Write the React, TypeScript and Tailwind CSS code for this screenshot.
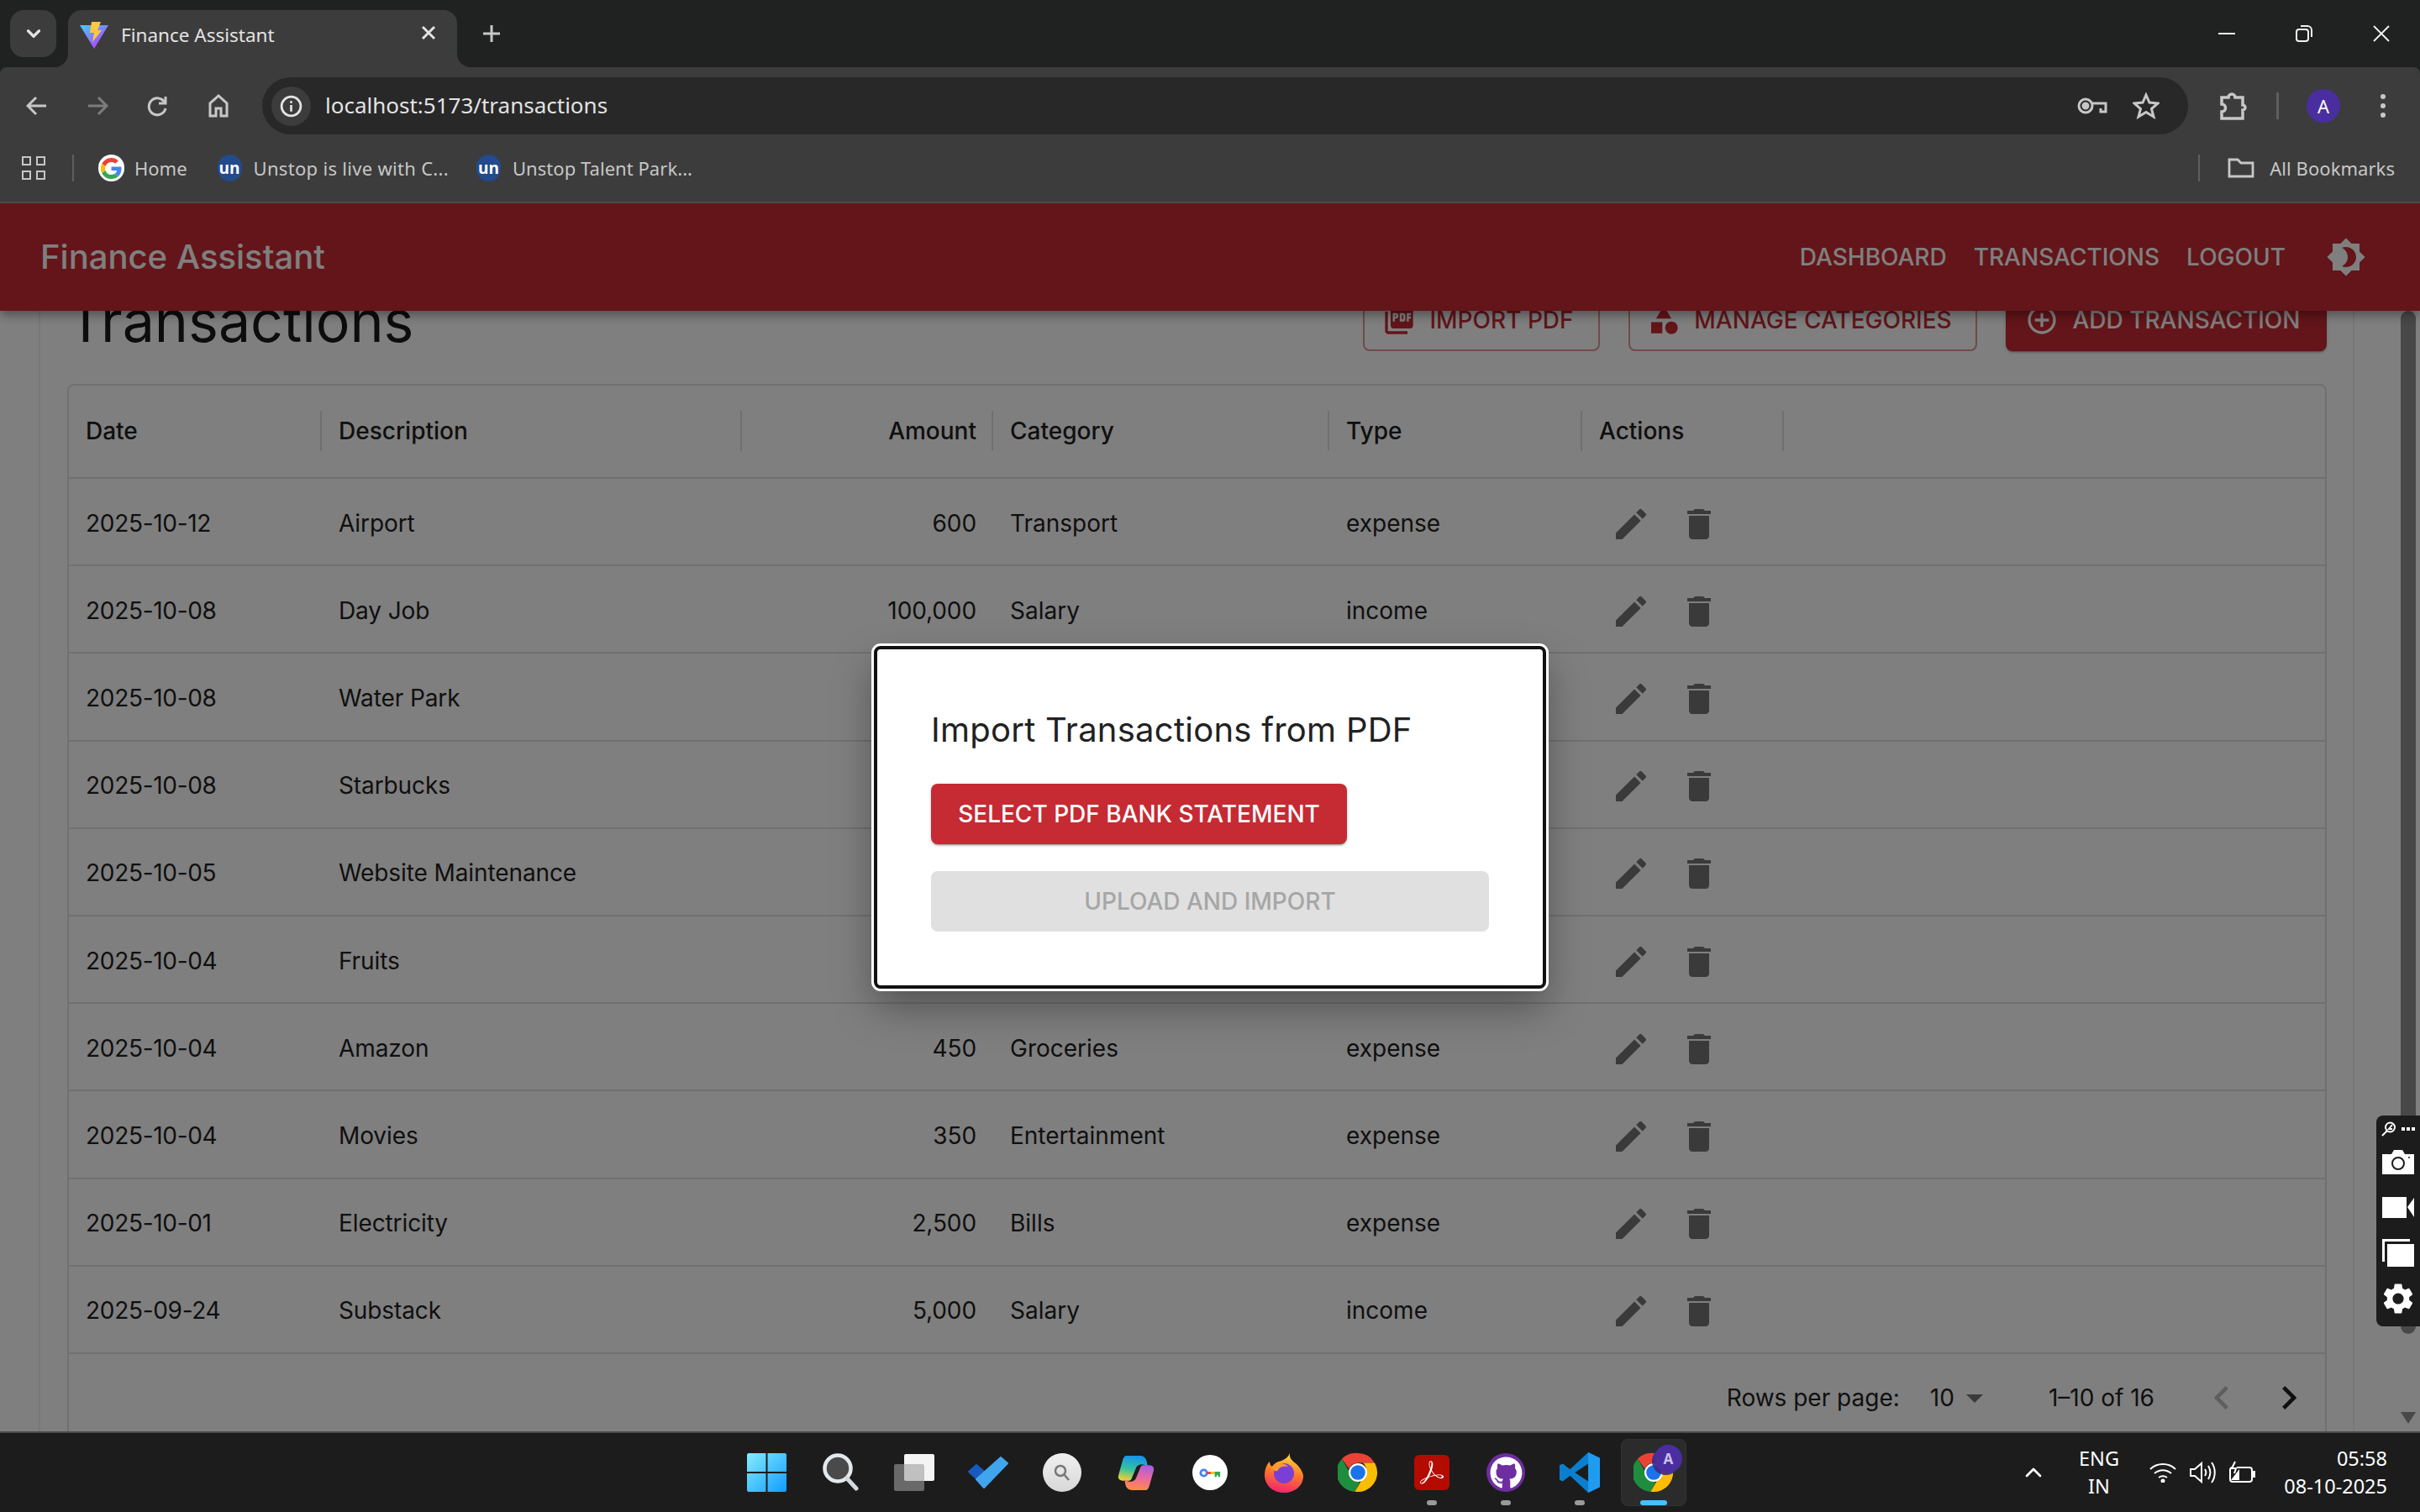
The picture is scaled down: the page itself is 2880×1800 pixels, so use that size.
import React from 'react';
import { ChevronDown, ChevronUp } from 'lucide-react';
import { FaGithub } from 'react-icons/fa';
import { SiAdobeacrobatreader } from 'react-icons/si';

const rows = [
  { date: '2025-10-12', desc: 'Airport', amount: '600', cat: 'Transport', type: 'expense' },
  { date: '2025-10-08', desc: 'Day Job', amount: '100,000', cat: 'Salary', type: 'income' },
  { date: '2025-10-08', desc: 'Water Park', amount: '1,200', cat: 'Entertainment', type: 'expense' },
  { date: '2025-10-08', desc: 'Starbucks', amount: '800', cat: 'Food', type: 'expense' },
  { date: '2025-10-05', desc: 'Website Maintenance', amount: '3,000', cat: 'Bills', type: 'expense' },
  { date: '2025-10-04', desc: 'Fruits', amount: '300', cat: 'Groceries', type: 'expense' },
  { date: '2025-10-04', desc: 'Amazon', amount: '450', cat: 'Groceries', type: 'expense' },
  { date: '2025-10-04', desc: 'Movies', amount: '350', cat: 'Entertainment', type: 'expense' },
  { date: '2025-10-01', desc: 'Electricity', amount: '2,500', cat: 'Bills', type: 'expense' },
  { date: '2025-09-24', desc: 'Substack', amount: '5,000', cat: 'Salary', type: 'income' },
];

const gridCols = 'grid grid-cols-[301px_500px_299px_400px_301px_240px_1fr]';

const Mui = ({ d, className }: { d: string; className?: string }) => (
  <svg viewBox="0 0 24 24" fill="currentColor" className={className}>
    <path d={d} />
  </svg>
);

const ChromeLogo = ({ className }: { className?: string }) => (
  <svg viewBox="0 0 48 48" className={className}>
    <path d="M24 1a23 23 0 0 1 20 11.5H24a11.5 11.5 0 0 0-10.6 7L5 7.8A23 23 0 0 1 24 1z" fill="#ea4335" />
    <path d="M5 7.8l10 17.3a11.5 11.5 0 0 0 11.2 10.3L20.4 46.7A23 23 0 0 1 5 7.8z" fill="#1e8e3e" />
    <path d="M44 12.5A23 23 0 0 1 20.4 46.7l10-17.2a11.5 11.5 0 0 0-.4-17z" fill="#fbbc04" />
    <circle cx="24" cy="24" r="11" fill="#fff" />
    <circle cx="24" cy="24" r="8.8" fill="#1a73e8" />
  </svg>
);

const UnLogo = () => (
  <div className="w-[29px] h-[32px] rounded-full bg-[#234a8a] flex items-center justify-center text-white font-bold text-[19px] leading-none font-['Open_Sans',sans-serif]">
    un
  </div>
);

const TaskSlot = ({ children, dot, active }: { children: React.ReactNode; dot?: boolean; active?: boolean }) => (
  <div className="relative w-[88px] h-[80px] flex items-center justify-center">
    {active && <div className="absolute inset-y-0 inset-x-[5px] rounded-lg bg-[#2b2b2b] border border-[#333333]" />}
    <div className="relative flex items-center justify-center">{children}</div>
    {dot && <span className="absolute bottom-[1px] left-[38px] w-[12px] h-[6px] rounded-full bg-[#9a9a9a]" />}
    {active && <span className="absolute bottom-[1px] left-[28px] w-[32px] h-[6px] rounded-full bg-[#47bfff]" />}
  </div>
);

const ChromeBar = () => (
  <div className="h-[242px] shrink-0 bg-[#202221] border-b-2 border-[#4a4a4a] font-['Noto_Sans',sans-serif]">
    <div className="h-[80px] flex items-end pl-[12px] relative">
      <div className="w-[55px] h-[56px] mb-[12px] rounded-2xl bg-[#3c3c3c] flex items-center justify-center text-[#e3e3e3]">
        <ChevronDown size={26} strokeWidth={3} />
      </div>
      <div className="relative ml-[14px] w-[463px] h-[68px] bg-[#3c3c3c] rounded-t-2xl flex items-center pl-[14px] pb-[8px]">
        <svg viewBox="0 0 34 32" className="w-[34px] h-[32px]">
          <defs>
            <linearGradient id="vt" x1="0" y1="0" x2="0.8" y2="1">
              <stop offset="0" stopColor="#41d1ff" />
              <stop offset="1" stopColor="#bd34fe" />
            </linearGradient>
          </defs>
          <path d="M0 4 L34 4 L17 32z" fill="url(#vt)" />
          <path d="M14 0 L25 0 L21 10 L26 10 L15 24 L17 13 L12 13z" fill="#ffc83d" />
        </svg>
        <span className="ml-[15px] text-[22.5px] text-[#e3e3e3] leading-none">Finance Assistant</span>
        <span className="absolute left-[419px] top-[17px] text-[#e3e3e3]">
          <svg viewBox="0 0 20 20" className="w-[20px] h-[20px]" stroke="currentColor" strokeWidth="3">
            <path d="M3 3l14 14M17 3L3 17" />
          </svg>
        </span>
        <svg viewBox="0 0 16 16" className="absolute -left-[16px] bottom-0 w-[16px] h-[16px]">
          <path d="M16 0A16 16 0 0 1 0 16H16z" fill="#3c3c3c" />
        </svg>
        <svg viewBox="0 0 16 16" className="absolute -right-[16px] bottom-0 w-[16px] h-[16px]">
          <path d="M0 0A16 16 0 0 0 16 16H0z" fill="#3c3c3c" />
        </svg>
      </div>
      <svg viewBox="0 0 22 22" className="ml-[30px] mb-[29px] w-[22px] h-[22px] text-[#c7c7c7]" stroke="currentColor" strokeWidth="3">
        <path d="M11 1v20M1 11h20" />
      </svg>
      <div className="flex-1" />
      <div className="flex items-center h-[80px] text-[#f2f2f2]">
        <div className="w-[20px] h-[2px] bg-current mr-[72px]" />
        <svg viewBox="0 0 20 20" fill="none" stroke="currentColor" strokeWidth="2" className="w-[20px] h-[20px] mr-[72px]">
          <rect x="1" y="5" width="14" height="14" rx="3" />
          <path d="M6 1h8a5 5 0 0 1 5 5v8" />
        </svg>
        <svg viewBox="0 0 20 20" stroke="currentColor" strokeWidth="1.8" className="w-[20px] h-[20px] mr-[36px]">
          <path d="M1 1l18 18M19 1L1 19" />
        </svg>
      </div>
    </div>

    <div className="h-[160px] bg-[#3c3c3c] rounded-t-lg">
      <div className="h-[92px] flex items-start pt-[12px]">
        <div className="flex items-center h-[68px] pl-[31px] text-[#c7c7c7]">
          <svg viewBox="0 0 26 26" fill="none" stroke="currentColor" strokeWidth="3" className="w-[26px] h-[26px]">
            <path d="M24 13H3M12 3L2 13l10 10" />
          </svg>
          <svg viewBox="0 0 26 26" fill="none" stroke="#7d7d7d" strokeWidth="3" className="w-[26px] h-[26px] ml-[46px]">
            <path d="M2 13h21M14 3l10 10-10 10" />
          </svg>
          <svg viewBox="0 0 26 26" fill="none" stroke="currentColor" strokeWidth="3" className="w-[26px] h-[26px] ml-[46px]">
            <path d="M21 9a10 10 0 1 0 1 7" />
            <path d="M22 2v8h-8" />
          </svg>
          <svg viewBox="0 0 26 28" fill="none" stroke="currentColor" strokeWidth="3" className="w-[26px] h-[28px] ml-[46px]">
            <path d="M3 26V11L13 2l10 9v15h-7v-9h-6v9z" />
          </svg>
        </div>
        <div className="ml-[39px] w-[2292px] h-[68px] rounded-full bg-[#282828] flex items-center pl-[11px] pr-[34px]">
          <div className="w-[47px] h-[47px] rounded-full bg-[#3c3c3c] flex items-center justify-center">
            <svg viewBox="0 0 26 26" fill="none" stroke="#e3e3e3" strokeWidth="2.6" className="w-[27px] h-[27px]">
              <circle cx="13" cy="13" r="11" />
              <path d="M13 11.5V19M13 7v2.4" />
            </svg>
          </div>
          <span className="ml-[17px] pb-[2px] text-[#e3e3e3] text-[26px] leading-none">localhost:5173/transactions</span>
          <div className="flex-1" />
          <svg viewBox="0 0 36 20" fill="none" stroke="#c7c7c7" strokeWidth="3" className="w-[36px] h-[20px]">
            <circle cx="10" cy="10" r="8" />
            <circle cx="10" cy="10" r="3" fill="#c7c7c7" />
            <path d="M18 7h16v10h-6v-4" />
          </svg>
          <svg viewBox="0 0 32 32" fill="none" stroke="#c7c7c7" strokeWidth="3" strokeLinejoin="miter" className="w-[32px] h-[32px] ml-[30px]">
            <path d="M16 3l4 9 10 1-7.500 6.500L25 29l-9-5.500L7 29l2.500-9.500L2 13l10-1z" />
          </svg>
        </div>
        <div className="flex items-center h-[68px] text-[#c7c7c7]">
          <svg viewBox="0 0 34 34" fill="none" stroke="currentColor" strokeWidth="3.500" className="w-[34px] h-[34px] ml-[36px]">
            <path d="M4 7h8a4 4 0 0 1 8 0h9v9a3 3 0 0 1 3 3 3 3 0 0 1-3 3v10H4v-8a4 4 0 0 0 0-9z" />
          </svg>
          <div className="ml-[35px] w-[3px] h-[32px] bg-[#5e5e5e]" />
          <div className="ml-[33px] w-[40px] h-[40px] rounded-full bg-[#4a2ea0] flex items-center justify-center text-white text-[22px] leading-none">
            A
          </div>
          <div className="ml-[48px] flex flex-col gap-[5px]">
            <span className="w-[6px] h-[6px] rounded-full bg-[#c7c7c7]" />
            <span className="w-[6px] h-[6px] rounded-full bg-[#c7c7c7]" />
            <span className="w-[6px] h-[6px] rounded-full bg-[#c7c7c7]" />
          </div>
        </div>
      </div>
      <div className="h-[68px] flex items-center pl-[26px] pb-[12px] text-[22px] text-[#c7c7c7] leading-none">
        <div className="grid grid-cols-2 gap-[6px]">
          <span className="w-[11px] h-[11px] border-[2.500px] border-[#c7c7c7]" />
          <span className="w-[11px] h-[11px] border-[2.500px] border-[#c7c7c7]" />
          <span className="w-[11px] h-[11px] border-[2.500px] border-[#c7c7c7]" />
          <span className="w-[11px] h-[11px] border-[2.500px] border-[#c7c7c7]" />
        </div>
        <div className="ml-[32px] w-[2px] h-[32px] bg-[#5e5e5e]" />
        <div className="ml-[29px] w-[31px] h-[32px] rounded-full bg-white flex items-center justify-center">
          <svg viewBox="0 0 48 48" className="w-[25px] h-[25px]">
            <path fill="#ea4335" d="M24 9.500c3.500 0 6.700 1.200 9.200 3.600l6.900-6.900C35.900 2.400 30.500 0 24 0 14.600 0 6.500 5.400 2.600 13.200l8 6.200C12.400 13.700 17.700 9.500 24 9.500z" />
            <path fill="#4285f4" d="M47 24.500c0-1.600-.1-3.100-.4-4.500H24v9h12.900c-.6 3-2.200 5.500-4.700 7.200l7.700 6C44.400 38.100 47 31.900 47 24.500z" />
            <path fill="#fbbc05" d="M10.500 28.600A14.500 14.500 0 0 1 10.500 19.400l-8-6.200A24 24 0 0 0 2.600 34.800z" />
            <path fill="#34a853" d="M24 48c6.500 0 11.900-2.100 15.900-5.800l-7.700-6c-2.200 1.400-5 2.300-8.200 2.300-6.300 0-11.600-4.200-13.500-9.900l-8 6.200C6.500 42.600 14.600 48 24 48z" />
          </svg>
        </div>
        <span className="ml-[12px]">Home</span>
        <div className="ml-[36px]"><UnLogo /></div>
        <span className="ml-[14px] tracking-[0.3px]">Unstop is live with C...</span>
        <div className="ml-[33px]"><UnLogo /></div>
        <span className="ml-[14px] tracking-[0.05px]">Unstop Talent Park...</span>
        <div className="flex-1" />
        <div className="w-[2px] h-[32px] bg-[#5e5e5e]" />
        <svg viewBox="0 0 32 24" fill="none" stroke="currentColor" strokeWidth="2.800" className="ml-[33px] w-[32px] h-[24px]">
          <path d="M2 2h10l4 4h14v16H2z" />
        </svg>
        <span className="ml-[18px] mr-[30px] tracking-[0.05px]">All Bookmarks</span>
      </div>
    </div>
  </div>
);

const AppHeader = () => (
  <header className="relative z-10 h-[128px] shrink-0 bg-[#c62a33] text-white flex items-center pl-[48px] pr-[64px] shadow-[0_4px_8px_-2px_rgba(0,0,0,0.2),0_8px_10px_0_rgba(0,0,0,0.14),0_2px_20px_0_rgba(0,0,0,0.12)]">
    <div className="text-[40px] font-medium">Finance Assistant</div>
    <div className="flex-1" />
    <nav className="flex items-center text-[28px] font-medium">
      <span className="px-[16px]">DASHBOARD</span>
      <span className="px-[16px]">TRANSACTIONS</span>
      <span className="px-[16px]">LOGOUT</span>
    </nav>
    <Mui
      className="ml-[32px] w-[48px] h-[48px]"
      d="M20 8.690V4h-4.690L12 .69 8.690 4H4v4.690L.69 12 4 15.310V20h4.690L12 23.310 15.310 20H20v-4.690L23.310 12 20 8.690zM12 18c-.89 0-1.740-.2-2.500-.55C11.560 16.500 13 14.420 13 12s-1.440-4.500-3.500-5.450C10.260 6.200 11.110 6 12 6c3.310 0 6 2.690 6 6s-2.690 6-6 6z"
    />
  </header>
);

const Toolbar = () => (
  <div className="flex items-center h-[72px] w-[2689px]">
    <h1 className="text-[68px] font-normal text-[#1a1a1a] leading-none">Transactions</h1>
    <div className="flex-1" />
    <button className="h-[72px] w-[282px] pr-[8px] pb-[2px] rounded-lg border-2 border-[#c62a3380] text-[#c62a33] flex items-center justify-center gap-[16px] text-[28px] font-medium">
      <Mui
        className="w-[40px] h-[40px]"
        d="M20 2H8c-1.100 0-2 .9-2 2v12c0 1.100.9 2 2 2h12c1.100 0 2-.9 2-2V4c0-1.100-.9-2-2-2zm-8.500 7.500c0 .83-.67 1.500-1.500 1.500H9v2H7.500V7H10c.83 0 1.500.67 1.500 1.500v1zm5 2c0 .83-.67 1.500-1.500 1.500h-2.500V7H15c.83 0 1.500.67 1.500 1.500v3zm4-3H19v1h1.500V11H19v2h-1.500V7h3v1.500zM9 9.500h1v-1H9v1zM4 6H2v14c0 1.100.9 2 2 2h14v-2H4V6zm10 5.500h1v-3h-1v3z"
      />
      IMPORT PDF
    </button>
    <button className="ml-[34px] h-[72px] w-[415px] pr-[8px] pb-[2px] rounded-lg border-2 border-[#c62a3380] text-[#c62a33] flex items-center justify-center gap-[16px] text-[28px] font-medium">
      <svg viewBox="0 0 24 24" fill="currentColor" className="w-[40px] h-[40px]">
        <path d="M12 2l-5.500 9h11z" />
        <circle cx="17.500" cy="17.500" r="4.500" />
        <path d="M3 13.500h8v8H3z" />
      </svg>
      MANAGE CATEGORIES
    </button>
    <button className="ml-[34px] h-[72px] w-[382px] pr-[8px] pb-[2px] rounded-lg bg-[#c62a33] text-white flex items-center justify-center gap-[16px] text-[28px] font-medium shadow-[0_3px_1px_-2px_rgba(0,0,0,0.2),0_2px_2px_0_rgba(0,0,0,0.14),0_1px_5px_0_rgba(0,0,0,0.12)]">
      <Mui
        className="w-[40px] h-[40px]"
        d="M13 7h-2v4H7v2h4v4h2v-4h4v-2h-4V7zm-1-5C6.480 2 2 6.480 2 12s4.480 10 10 10 10-4.480 10-10S17.520 2 12 2zm0 18c-4.410 0-8-3.590-8-8s3.590-8 8-8 8 3.590 8 8-3.590 8-8 8z"
      />
      ADD TRANSACTION
    </button>
  </div>
);

const HeaderCell = ({ label, right }: { label: string; right?: boolean }) => (
  <div className="relative flex items-center px-[20px] pb-[2px]">
    <span className={`font-medium ${right ? 'ml-auto' : ''}`}>{label}</span>
    <span className="absolute right-0 top-[30px] h-[48px] w-[2px] bg-[#e0e0e0]" />
  </div>
);

const DataTable = () => (
  <div className="mt-[39px] rounded-lg border-2 border-[#e0e0e0] text-[28px] text-[#212121] w-[2689px]">
    <div className={`${gridCols} h-[111px] border-b-2 border-[#e0e0e0]`}>
      <HeaderCell label="Date" />
      <HeaderCell label="Description" />
      <HeaderCell label="Amount" right />
      <HeaderCell label="Category" />
      <HeaderCell label="Type" />
      <HeaderCell label="Actions" />
    </div>
    {rows.map((r, i) => (
      <div key={i} className={`${gridCols} h-[104.2px] pt-[3px] border-b-2 border-[#e0e0e0] items-center`}>
        <div className="px-[20px] tracking-[-0.3px]">{r.date}</div>
        <div className="px-[20px] tracking-[-0.1px]">{r.desc}</div>
        <div className="px-[20px] text-right tracking-[-0.1px]">{r.amount}</div>
        <div className="px-[20px]">{r.cat}</div>
        <div className="px-[20px]">{r.type}</div>
        <div className="pl-[34px] mt-[2px] flex items-center gap-[33px] text-[#757575]">
          <Mui
            className="w-[48px] h-[48px]"
            d="M3 17.250V21h3.750L17.810 9.940l-3.750-3.750zM20.710 7.040c.39-.39.39-1.020 0-1.410l-2.340-2.340a.9959.9959 0 0 0-1.410 0l-1.830 1.830 3.750 3.750z"
          />
          <Mui className="w-[48px] h-[48px]" d="M6 19c0 1.100.9 2 2 2h8c1.100 0 2-.9 2-2V7H6zM19 4h-3.500l-1-1h-5l-1 1H5v2h14z" />
        </div>
      </div>
    ))}
    <div className="h-[104px] flex items-center justify-end pr-[3px]">
      <span>Rows per page:</span>
      <span className="ml-[36px]">10</span>
      <svg viewBox="0 0 24 24" fill="#757575" className="w-[48px] h-[48px]">
        <path d="M7 10l5 5 5-5z" />
      </svg>
      <span className="ml-[64px]">1–10 of 16</span>
      <Mui className="ml-[40px] w-[80px] h-[56px] text-[#bdbdbd]" d="M15.410 7.410 14 6l-6 6 6 6 1.410-1.410L10.830 12z" />
      <Mui className="w-[80px] h-[56px] text-[#212121]" d="M10 6 8.590 7.410 13.170 12l-4.580 4.590L10 18l6-6z" />
    </div>
  </div>
);

const ImportModal = () => (
  <div className="absolute inset-0 z-20 bg-black/50 flex items-center justify-center">
    <div className="w-[800px] h-[408px] border-4 border-[#111111] ring-[3px] ring-white rounded-lg bg-white p-[64px] flex flex-col shadow-[0_22px_48px_rgba(0,0,0,0.35)]">
      <h2 className="text-[40px] leading-[64px] text-[#212121] font-normal tracking-[0.25px]">Import Transactions from PDF</h2>
      <button className="mt-[32px] self-start h-[72px] w-[495px] rounded-lg bg-[#c62a33] text-white text-[28px] font-medium shadow-[0_3px_1px_-2px_rgba(0,0,0,0.2),0_2px_2px_0_rgba(0,0,0,0.14),0_1px_5px_0_rgba(0,0,0,0.12)]">
        SELECT PDF BANK STATEMENT
      </button>
      <button className="mt-[32px] h-[72px] w-full rounded-lg bg-[#e0e0e0] text-[#a6a6a6] text-[28px] font-medium">
        UPLOAD AND IMPORT
      </button>
    </div>
  </div>
);

const ScrollBar = () => (
  <>
    <div className="absolute left-[2857px] top-[128px] w-[18px] h-[1218px] rounded-full bg-[#919191]" />
    <svg viewBox="0 0 18 14" className="absolute left-[2857px] top-[1439px] w-[18px] h-[14px]">
      <path d="M0 0h18L9 14z" fill="#919191" />
    </svg>
  </>
);

const FloatingWidget = () => (
  <div className="absolute z-30 right-0 top-[1086px] w-[52px] h-[251px] bg-[#1c1c1c] rounded-l-lg flex flex-col items-center pt-[7px]">
    <div className="flex items-center justify-between w-[40px] h-[18px]">
      <svg viewBox="0 0 18 18" fill="none" stroke="white" strokeWidth="2" className="w-[18px] h-[18px]">
        <circle cx="10.500" cy="7" r="5.500" />
        <path d="M6.500 11.500L1 17M13 4L9 9h4" />
      </svg>
      <div className="flex gap-[2px]">
        <span className="w-[4px] h-[4px] bg-white" />
        <span className="w-[4px] h-[4px] bg-white" />
        <span className="w-[4px] h-[4px] bg-white" />
      </div>
    </div>
    <svg viewBox="0 0 38 29" className="mt-[16px] w-[38px] h-[29px]">
      <path d="M0 5h11l3-5h10l3 5h11v24H0z" fill="white" />
      <circle cx="19" cy="16" r="7" fill="white" stroke="#1c1c1c" strokeWidth="2" />
      <circle cx="32" cy="9" r="1" fill="#1c1c1c" />
    </svg>
    <svg viewBox="0 0 38 25" className="mt-[27px] w-[38px] h-[25px]">
      <path d="M0 0h29v25H0z" fill="white" />
      <path d="M30 12l8-11v23z" fill="white" />
    </svg>
    <svg viewBox="0 0 38 33" className="mt-[25px] w-[38px] h-[33px]">
      <path d="M0 0h33v3H3v24H0z" fill="white" />
      <path d="M6 6h32v27H6z" fill="white" />
    </svg>
    <Mui
      className="mt-[16px] w-[44px] h-[44px] text-white"
      d="M19.140 12.940c.04-.3.06-.61.06-.94 0-.32-.02-.64-.07-.94l2.030-1.580c.18-.14.23-.41.12-.61l-1.920-3.320c-.12-.22-.37-.29-.59-.22l-2.390.96c-.5-.38-1.030-.7-1.620-.94l-.36-2.540c-.04-.24-.24-.41-.48-.41h-3.840c-.24 0-.43.17-.47.41l-.36 2.540c-.59.24-1.130.57-1.620.94l-2.390-.96c-.22-.08-.47 0-.59.22L2.740 8.870c-.12.21-.08.47.12.61l2.030 1.580c-.05.3-.09.63-.09.94s.02.64.07.94l-2.030 1.580c-.18.14-.23.41-.12.61l1.920 3.320c.12.22.37.29.59.22l2.390-.96c.5.38 1.030.7 1.620.94l.36 2.540c.05.24.24.41.48.41h3.840c.24 0 .44-.17.47-.41l.36-2.540c.59-.24 1.130-.56 1.620-.94l2.390.96c.22.08.47 0 .59-.22l1.920-3.320c.12-.22.07-.47-.12-.61l-2.010-1.580zM12 15.600c-1.980 0-3.600-1.620-3.600-3.600s1.620-3.600 3.600-3.600 3.600 1.620 3.600 3.600-1.620 3.600-3.600 3.600z"
    />
  </div>
);

const Taskbar = () => (
  <div className="h-[96px] shrink-0 bg-[#1c1c1c] border-t-2 border-[#4a4a4a] flex items-center font-['Noto_Sans',sans-serif] text-white">
    <div className="w-[868px]" />
    <TaskSlot>
      <svg viewBox="0 0 47 46" className="w-[47px] h-[46px]">
        <defs>
          <linearGradient id="win" x1="0" y1="0" x2="1" y2="1">
            <stop offset="0" stopColor="#86ecff" />
            <stop offset="1" stopColor="#0f9dff" />
          </linearGradient>
        </defs>
        <path d="M2 0h20.500v22H0V2a2 2 0 0 1 2-2zM24.500 0H45a2 2 0 0 1 2 2v20H24.500zM0 24h22.500v22H2a2 2 0 0 1-2-2zM24.500 24H47v20a2 2 0 0 1-2 2H24.500z" fill="url(#win)" />
      </svg>
    </TaskSlot>
    <TaskSlot>
      <svg viewBox="0 0 44 46" className="w-[44px] h-[46px]">
        <circle cx="19" cy="18" r="15.500" fill="#4a4a4a" stroke="#e5e9ec" strokeWidth="4.500" />
        <path d="M30 30l11 12" stroke="#d5d9dc" strokeWidth="5" strokeLinecap="round" />
      </svg>
    </TaskSlot>
    <TaskSlot>
      <div className="relative w-[48px] h-[44px]">
        <div className="absolute right-0 top-0 w-[36px] h-[32px] rounded-[2px] bg-[#f4f4f4]" />
        <div className="absolute left-0 bottom-0 w-[36px] h-[32px] rounded-[2px] bg-[#9d9d9d]/60" />
      </div>
    </TaskSlot>
    <TaskSlot>
      <svg viewBox="0 0 48 38" className="w-[48px] h-[38px]" strokeLinejoin="round">
        <path d="M1 18L10 10L24 22L14 30z" fill="#185abd" stroke="#185abd" strokeWidth="2" />
        <path d="M10 27L39 1L47 8L19 37z" fill="#41a5ee" stroke="#41a5ee" strokeWidth="2" />
      </svg>
    </TaskSlot>
    <TaskSlot>
      <div className="w-[46px] h-[46px] rounded-full bg-linear-to-b from-[#f0f0f0] to-[#d8d8d8] flex items-center justify-center">
        <svg viewBox="0 0 20 20" fill="none" stroke="#777777" strokeWidth="2.500" className="w-[20px] h-[20px]">
          <circle cx="8" cy="8" r="6" />
          <path d="M12 12l6 7" />
        </svg>
      </div>
    </TaskSlot>
    <TaskSlot>
      <svg viewBox="0 0 43 42" className="w-[44px] h-[43px]">
        <defs>
          <linearGradient id="cp1" x1="0.5" y1="0" x2="0.3" y2="1">
            <stop offset="0" stopColor="#1694ea" />
            <stop offset="0.55" stopColor="#37c3a0" />
            <stop offset="1" stopColor="#f4d02e" />
          </linearGradient>
          <linearGradient id="cp2" x1="0.5" y1="0" x2="0.3" y2="1">
            <stop offset="0" stopColor="#ff8a4a" />
            <stop offset="0.5" stopColor="#e86aa0" />
            <stop offset="1" stopColor="#a95ce6" />
          </linearGradient>
        </defs>
        <path d="M10 1H26C30 1 33 3 34 8L35 14C31 10 25 10 22 14L17 26C16 29 15 30 13 30H6C2 30 0 27 1 24L6 6C7 3 8 1 10 1z" fill="url(#cp1)" />
        <path d="M10 1H26C30 1 33 3 34 8L35 14C31 10 25 10 22 14L17 26C16 29 15 30 13 30H6C2 30 0 27 1 24L6 6C7 3 8 1 10 1z" fill="url(#cp2)" transform="rotate(180 21.500 21)" />
      </svg>
    </TaskSlot>
    <TaskSlot>
      <div className="w-[42px] h-[42px] rounded-full bg-white flex items-center justify-center">
        <svg viewBox="0 0 28 14" className="w-[26px] h-[13px]" fill="none">
          <circle cx="6" cy="7" r="4" stroke="#4285f4" strokeWidth="3" />
          <path d="M10 7h5" stroke="#ea4335" strokeWidth="3" />
          <path d="M15 7h5" stroke="#fbbc04" strokeWidth="3" />
          <path d="M20 5.500h7V12h-2.500V10h-2v2H20z" fill="#34a853" />
        </svg>
      </div>
    </TaskSlot>
    <TaskSlot>
      <svg viewBox="0 0 46 48" className="w-[46px] h-[48px]">
        <defs>
          <linearGradient id="ff" x1="0.6" y1="0" x2="0.4" y2="1">
            <stop offset="0" stopColor="#ffe03c" />
            <stop offset="0.5" stopColor="#ff7a2a" />
            <stop offset="1" stopColor="#f0246e" />
          </linearGradient>
        </defs>
        <path d="M30 0c-1 7 2 9 8 14 6 6 8 12 8 14 0 12-10 20-23 20S0 39 0 27c0-6 2-12 6-16 0 3 1 5 3 6 3-5 8-6 11-7 5-2 9-5 10-10z" fill="url(#ff)" />
        <circle cx="23" cy="25" r="12" fill="#7b3fd6" />
        <path d="M8 18c6-6 15-6 20-1-5-1-10 0-12 4-2 3-6 0-8-3z" fill="#ff9a2e" />
      </svg>
    </TaskSlot>
    <TaskSlot>
      <ChromeLogo className="w-[48px] h-[48px]" />
    </TaskSlot>
    <TaskSlot dot>
      <div className="w-[42px] h-[42px] rounded-[6px] bg-[#b30b00] flex items-center justify-center text-white">
        <SiAdobeacrobatreader size={28} />
      </div>
    </TaskSlot>
    <TaskSlot dot>
      <div className="w-[46px] h-[46px] rounded-full bg-[#6e2da0] flex items-center justify-center text-white">
        <FaGithub size={39} />
      </div>
    </TaskSlot>
    <TaskSlot dot>
      <svg viewBox="0 0 100 100" className="w-[48px] h-[48px]">
        <path d="M71 0l29 14v72L71 100 26 58 8 72 0 68V32l8-4 18 14z" fill="#0a7fd0" />
        <path d="M71 0l29 14v72l-29 14z" fill="#1f9cf0" />
        <path d="M71 28L38 50l33 22z" fill="#1c1c1c" />
      </svg>
    </TaskSlot>
    <TaskSlot active>
      <div className="relative w-[48px] h-[48px]">
        <ChromeLogo className="w-[48px] h-[48px]" />
        <div className="absolute -right-[10px] -top-[9px] w-[33px] h-[33px] rounded-full bg-[#4a2ea0] shadow-[-3px_3px_0_rgba(60,40,130,0.9)] flex items-center justify-center text-[#c9bfe8] text-[17px] font-bold leading-none">
          A
        </div>
      </div>
    </TaskSlot>
    <div className="flex-1 flex items-center">
      <ChevronUp size={32} strokeWidth={2} className="ml-[392px]" />
      <div className="ml-[32px] w-[60px] text-center text-[23.5px] leading-[33px]">
        <div>ENG</div>
        <div>IN</div>
      </div>
      <svg viewBox="0 0 32 24" fill="none" stroke="white" strokeWidth="2" className="ml-[30px] w-[32px] h-[24px]">
        <path d="M1 8c8-8 22-8 30 0M6 13c6-5 14-5 20 0M11 18c3-2 7-2 10 0" />
        <circle cx="16" cy="22" r="1.500" fill="white" />
      </svg>
      <svg viewBox="0 0 32 28" fill="none" stroke="white" strokeWidth="2" className="ml-[15px] w-[32px] h-[28px]">
        <path d="M2 10h5l8-7v22l-8-7H2z" />
        <path d="M19 10c2 3 2 5 0 8M23 6c3 5 3 11 0 16M27 2c5 7 5 17 0 24" />
      </svg>
      <svg viewBox="0 0 32 28" fill="none" stroke="white" strokeWidth="2" className="ml-[15px] w-[32px] h-[28px]">
        <path d="M10 8h15a3 3 0 0 1 3 3v11a3 3 0 0 1-3 3H5a3 3 0 0 1-3-3V11a3 3 0 0 1 3-3" />
        <path d="M29 13h2v6h-2" fill="white" />
        <path d="M5 22l7-9v9z" fill="white" />
        <path d="M8 1L4 9h5l-2 6" strokeWidth="2" />
      </svg>
      <div className="ml-[27px] w-[130px] text-right text-[23.5px] leading-[33px] whitespace-nowrap">
        <div>05:58</div>
        <div>08-10-2025</div>
      </div>
    </div>
  </div>
);

export default function App() {
  return (
    <div className="relative w-[2880px] h-[1800px] overflow-hidden flex flex-col bg-white font-['Inter',sans-serif]">
      <ChromeBar />
      <div className="relative flex-1 min-h-0 flex flex-col overflow-hidden">
        <AppHeader />
        <div className="flex-1 min-h-0 overflow-hidden">
          <div className="ml-[46px] w-[2756px] -mt-[24px] px-[32px] border-x-2 border-[#f0f0f0] h-[1500px]">
            <Toolbar />
            <DataTable />
          </div>
        </div>
        <ScrollBar />
        <ImportModal />
        <FloatingWidget />
      </div>
      <Taskbar />
    </div>
  );
}
